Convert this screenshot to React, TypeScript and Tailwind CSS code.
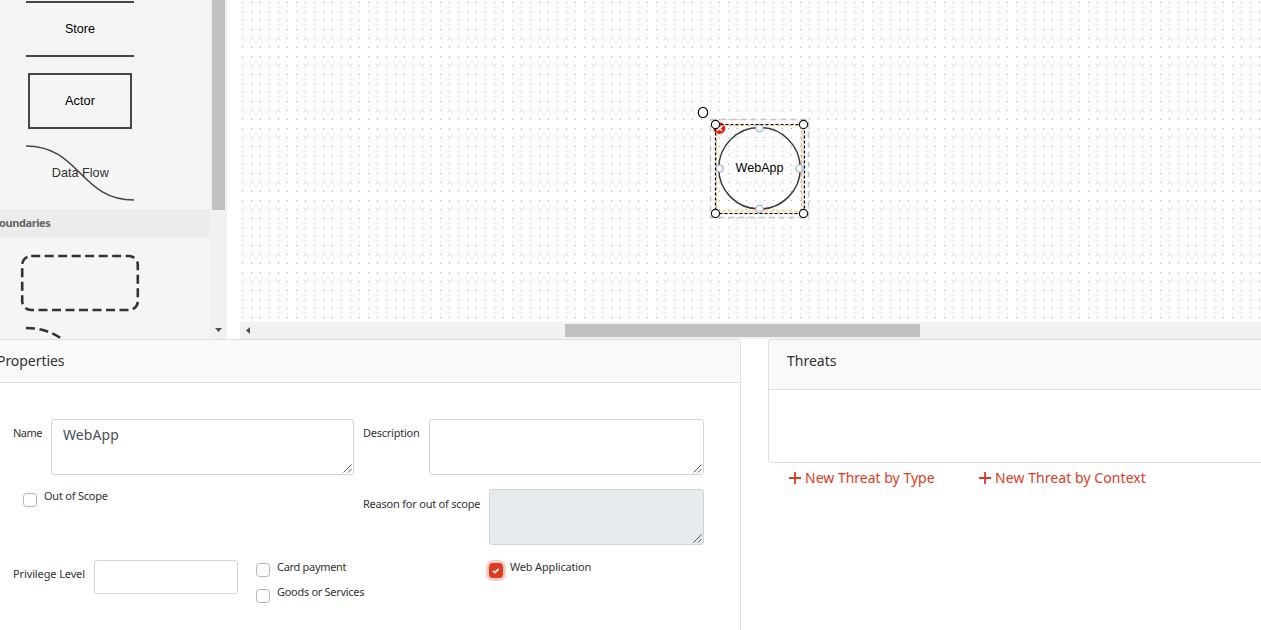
import React from "react";

function ResizeGrip() {
  return (
    <svg className="absolute right-px bottom-px" width="9" height="9" viewBox="0 0 9 9" fill="none" stroke="#555" strokeWidth="1">
      <path d="M0.5 8.5L8.5 0.5M5 8.5L8.5 5" />
    </svg>
  );
}

function Field({ className, value }: { className: string; value?: string }) {
  return (
    <div className={"relative shrink-0 rounded-[3px] border border-[#ced4da] " + className}>
      <textarea
        className="block h-full w-full resize-none bg-transparent px-[11px] py-[4px] font-['Noto_Sans',sans-serif] text-[14px] leading-[22px] tracking-[0.1px] text-[#495057] outline-none"
        defaultValue={value}
      />
      <ResizeGrip />
    </div>
  );
}

function Check({ checked }: { checked?: boolean }) {
  if (checked) {
    return (
      <span className="flex h-[15px] w-[14px] shrink-0 items-center justify-center rounded-[4px] bg-[#df3a20] ring-[3px] ring-[#f8cfc9]">
        <svg width="8" height="8" viewBox="0 0 8 8" fill="none" stroke="#fff" strokeWidth="1.8">
          <path d="M1 3.8L3 5.6L6.6 2" />
        </svg>
      </span>
    );
  }
  return <span className="h-[14px] w-[14px] shrink-0 rounded-[3.5px] border border-[#adb5bd] bg-white" />;
}

function Palette() {
  return (
    <div className="flex h-[339px] w-[227px] shrink-0">
      <div className="h-full w-[210px] overflow-hidden bg-[#f5f5f5]">
        <svg className="block" width="210" height="209" fill="none" stroke="#464646" strokeWidth="2">
          <path d="M26 2H134M26 56H134" />
          <rect x="29" y="74" width="102" height="54" />
          <path d="M26 146C80 146 80 200 134 200" strokeWidth="1.5" />
          <g fontFamily="Liberation Sans, sans-serif" fontSize="12.6" textAnchor="middle" stroke="none" fill="#000">
            <text x="80" y="33" textLength="30" lengthAdjust="spacingAndGlyphs">Store</text>
            <text x="80" y="105" textLength="30" lengthAdjust="spacingAndGlyphs">Actor</text>
            <text x="80.3" y="177" textLength="57" lengthAdjust="spacingAndGlyphs" fill="#333">Data Flow</text>
          </g>
        </svg>
        <div className="flex h-[29px] items-center bg-[#ececec] pb-0.5 font-['Noto_Sans',sans-serif] text-[11px] font-bold tracking-[-0.4px] text-[#666]">
          <span className="ml-[-1px]">oundaries</span>
        </div>
        <svg className="block" width="210" height="101" fill="none" stroke="#333" strokeWidth="2.6">
          <rect x="22.2" y="18" width="115.6" height="54" rx="9" strokeDasharray="9 4.5" />
          <path d="M26 90C80 90 80 144 134 144" strokeDasharray="9 4.5" />
        </svg>
      </div>
      <div className="flex h-full w-[17px] flex-col items-center justify-between bg-[#f1f1f1]">
        <div className="h-[210px] w-[13px] bg-[#c1c1c1]" />
        <svg width="17" height="17" fill="#505050">
          <path d="M5 6H12L8.5 10Z" />
        </svg>
      </div>
    </div>
  );
}

function Node() {
  return (
    <svg className="absolute left-[450px] top-[95px]" width="130" height="135" viewBox="690 95 130 135" fill="none">
      <rect x="710.5" y="119.5" width="98" height="98" stroke="#c4c4c4" strokeWidth="1.5" strokeDasharray="6 4" />
      <path d="M717 213.5H802M803 125V212" stroke="#e4e8e4" strokeWidth="2" />
      <circle cx="759.5" cy="168.3" r="40.8" stroke="#3c3c3c" strokeWidth="1.5" />
      <text x="759.5" y="172" textAnchor="middle" fontFamily="Liberation Sans, sans-serif" fontSize="12.6" fill="#000" textLength="48" lengthAdjust="spacingAndGlyphs">WebApp</text>
      <g stroke="#82aaf0" strokeWidth="1.1" fill="#fff">
        <circle cx="759.5" cy="128" r="3.7" />
        <circle cx="719.5" cy="168.5" r="3.5" />
        <circle cx="799.5" cy="168.5" r="3.7" />
        <circle cx="759.5" cy="209" r="3.7" />
      </g>
      <circle cx="719.3" cy="128.2" r="5.9" fill="#f61500" />
      <path d="M717 126L722 131M722.3 125.8L717 131" stroke="#fff" strokeWidth="1.7" />
      <rect x="716.5" y="125.5" width="85" height="85.5" stroke="#feb663" strokeDasharray="4 2" />
      <path d="M715.5 124.5H804.5V213.5H715.5Z" stroke="#000" strokeWidth="1.2" strokeDasharray="3 2" />
      <g stroke="#111" strokeWidth="1.2" fill="#fff">
        <ellipse cx="703" cy="112.5" rx="4.7" ry="5.2" />
        <circle cx="715.5" cy="124.5" r="4.1" />
        <circle cx="803.5" cy="124.5" r="4.1" />
        <circle cx="715.5" cy="213.5" r="4.1" />
        <circle cx="803.5" cy="213.5" r="4.1" />
      </g>
    </svg>
  );
}

function Canvas() {
  return (
    <div className="relative flex h-[339px] min-w-0 flex-1 flex-col">
      <svg className="block h-[322px] w-full">
        <defs>
          <pattern id="dots" width="9" height="9" patternUnits="userSpaceOnUse">
            <rect x="2" y="2" width="1" height="1" fill="#aaa" />
          </pattern>
        </defs>
        <rect width="100%" height="100%" fill="url(#dots)" />
      </svg>
      <div className="flex h-[17px] items-center bg-[#f1f1f1]">
        <svg width="17" height="17" fill="#505050">
          <path d="M10 5V12L6 8.5Z" />
        </svg>
        <div className="ml-[308px] h-[13px] w-[355px] bg-[#c1c1c1]" />
      </div>
      <Node />
    </div>
  );
}

function Properties() {
  return (
    <section className="h-[300px] w-[741px] shrink-0 rounded-tr-[4px] border-t border-r border-[#dfdfdf]">
      <h2 className="flex h-[43px] items-center rounded-tr-[4px] border-b border-[#dfdfdf] bg-[#f9f9f9] text-[14px] tracking-[-0.05px]">
        <span className="ml-[-3px]">Properties</span>
      </h2>
      <div className="flex pt-9 pl-[13px] text-[11px]">
        <span className="w-[38px] pt-[6px] tracking-[-0.5px]">Name</span>
        <Field className="h-[56px] w-[303px]" value="WebApp" />
        <span className="ml-[9px] w-[66px] pt-[6px] tracking-[-0.25px]">Description</span>
        <Field className="h-[56px] w-[275px]" />
      </div>
      <div className="flex pt-[14px] text-[11px] tracking-[-0.22px]">
        <div className="flex w-[363px] items-start pl-[23px]">
          <span className="mt-1 flex"><Check /></span>
          <span className="ml-[7px] -mt-px">Out of Scope</span>
        </div>
        <span className="w-[126px] pt-[7px]">Reason for out of scope</span>
        <Field className="h-[56px] w-[215px] bg-[#e7ebee]" />
      </div>
      <div className="flex pt-[15px] pl-[13px] text-[11px] tracking-[-0.3px]">
        <span className="w-[81px] pt-[6px] tracking-[-0.12px]">Privilege Level</span>
        <input className="h-[34px] w-[144px] rounded-[3px] border border-[#ced4da]" />
        <div className="ml-[18px] w-[233px]">
          <div className="flex h-[25px] items-start">
            <span className="mt-[3px] flex"><Check /></span>
            <span className="ml-[7px] -mt-px">Card payment</span>
          </div>
          <div className="flex h-[25px] items-start">
            <span className="mt-1 flex"><Check /></span>
            <span className="ml-[7px] -mt-px">Goods or Services</span>
          </div>
        </div>
        <span className="mt-[3px] flex self-start"><Check checked /></span>
        <span className="ml-[7px] -mt-px tracking-[-0.18px]">Web Application</span>
      </div>
    </section>
  );
}

function AddLink({ label, className }: { label: string; className: string }) {
  return (
    <a className={"flex items-center gap-1 whitespace-nowrap " + className}>
      <svg width="12" height="12" fill="none" stroke="#df3a20" strokeWidth="1.8">
        <path d="M0 6H12M6 0V12" />
      </svg>
      {label}
    </a>
  );
}

function Threats() {
  return (
    <div className="ml-[27px] min-w-0 flex-1">
      <section className="h-[124px] rounded-l-[4px] border-y border-l border-[#dfdfdf]">
        <h2 className="h-[50px] rounded-tl-[4px] border-b border-[#dfdfdf] bg-[#f9f9f9] pt-[10px] pl-[18px] text-[14px] leading-[21px]">
          Threats
        </h2>
      </section>
      <div className="flex pt-[4px] pl-[21px] text-[14px] leading-[21px] text-[#df3a20]">
        <AddLink className="w-[190px]" label="New Threat by Type" />
        <AddLink className="tracking-[0.07px]" label="New Threat by Context" />
      </div>
    </div>
  );
}

export default function App() {
  return (
    <div className="h-[630px] w-[1261px] overflow-hidden bg-white font-['Noto_Sans',sans-serif] leading-[16px] text-[#333]">
      <div className="flex gap-[13px]">
        <Palette />
        <Canvas />
      </div>
      <div className="flex">
        <Properties />
        <Threats />
      </div>
    </div>
  );
}
